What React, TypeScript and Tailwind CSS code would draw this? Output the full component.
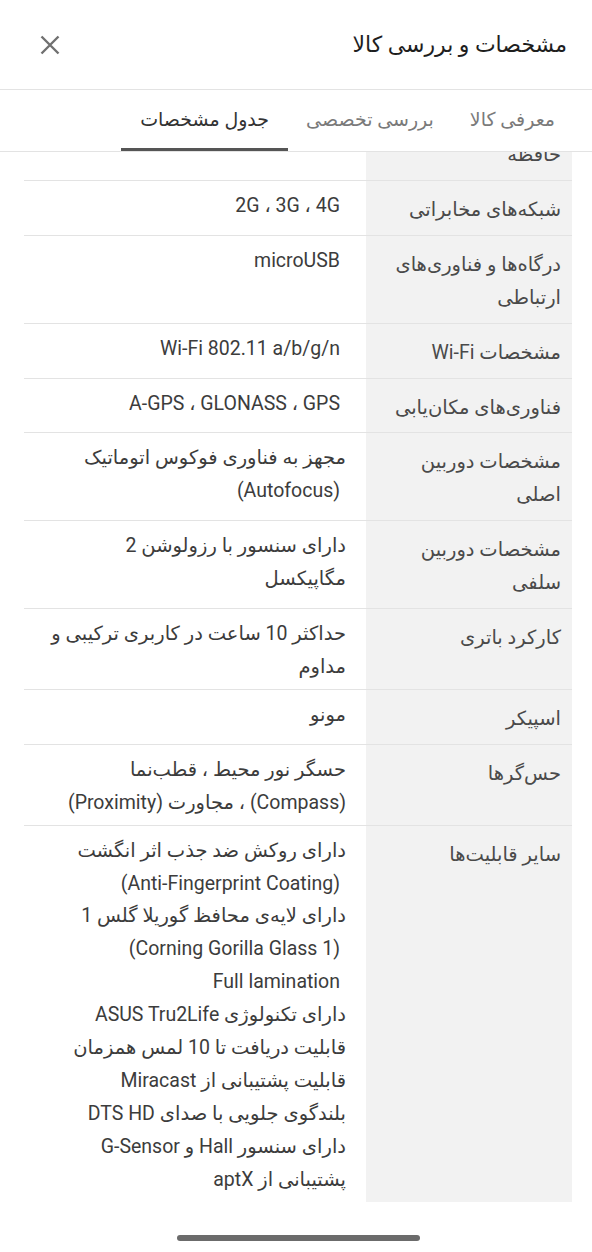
import React from 'react';

type Spec = { label: string[]; value: string[] };

const specs: Spec[] = [
  { label: ['حافظه'], value: [] },
  { label: ['شبکه‌های مخابراتی'], value: ['2G ، 3G ، 4G'] },
  { label: ['درگاه‌ها و فناوری‌های', 'ارتباطی'], value: ['microUSB'] },
  { label: ['مشخصات Wi-Fi'], value: ['Wi-Fi 802.11 a/b/g/n'] },
  { label: ['فناوری‌های مکان‌یابی'], value: ['A-GPS ، GLONASS ، GPS'] },
  { label: ['مشخصات دوربین', 'اصلی'], value: ['مجهز به فناوری فوکوس اتوماتیک', '(Autofocus)'] },
  { label: ['مشخصات دوربین', 'سلفی'], value: ['دارای سنسور با رزولوشن 2', 'مگاپیکسل'] },
  { label: ['کارکرد باتری'], value: ['حداکثر 10 ساعت در کاربری ترکیبی و', 'مداوم'] },
  { label: ['اسپیکر'], value: ['مونو'] },
  { label: ['حس‌گرها'], value: ['حسگر نور محیط ، قطب‌نما', '(Compass) ، مجاورت (Proximity)'] },
  {
    label: ['سایر قابلیت‌ها'],
    value: [
      'دارای روکش ضد جذب اثر انگشت',
      '(Anti-Fingerprint Coating)',
      'دارای لایه‌ی محافظ گوریلا گلس 1',
      '(Corning Gorilla Glass 1)',
      'Full lamination',
      'دارای تکنولوژی ASUS Tru2Life',
      'قابلیت دریافت تا 10 لمس همزمان',
      'قابلیت پشتیبانی از Miracast',
      'بلندگوی جلویی با صدای DTS HD',
      'دارای سنسور Hall و G-Sensor',
      'پشتیبانی از aptX',
    ],
  },
];

const tabs = ['معرفی کالا', 'بررسی تخصصی', 'جدول مشخصات'];

// lines with no Persian letters are laid out ltr and sit a little further in
const isLatin = (s: string) => !/[\u0600-\u06ff]/.test(s.replace(/،/g, ''));

export default function App() {
  return (
    <div
      dir="rtl"
      className="relative flex h-[1252px] w-[592px] flex-col overflow-hidden bg-white"
      style={{ fontFamily: 'Roboto, "DejaVu Sans", sans-serif' }}
    >
      <header className="flex h-[90px] shrink-0 items-center justify-between border-b border-[#e3e3e3] pr-[25px] pl-[40px]">
        <h1 className="text-[22px] font-medium text-[#1e1e1e]">مشخصات و بررسی کالا</h1>
        <button className="flex h-[20px] w-[20px] items-center justify-center text-[#707070]">
          <svg viewBox="0 0 20 20" width="20" height="20" fill="none" stroke="currentColor" strokeWidth="2.4">
            <path d="M1.5 1.5 18.5 18.5M18.5 1.5 1.5 18.5" />
          </svg>
        </button>
      </header>

      <nav className="relative z-10 flex h-[62px] shrink-0 items-stretch border-b border-[#e3e3e3] bg-white pr-[19px]">
        {tabs.map((t, i) => {
          const active = i === 2;
          return (
            <div
              key={t}
              className={
                active
                  ? 'flex items-center border-b-[3px] border-[#555] px-[19px] pt-[3px] text-[19px] font-medium whitespace-nowrap text-[#333]'
                  : 'flex items-center px-[18px] text-[19px] whitespace-nowrap text-[#7a7a7a]'
              }
            >
              {t}
            </div>
          );
        })}
      </nav>

      <div className="flex-1 overflow-hidden">
        <div className="mt-[-26px] mr-[20px] ml-[24px]">
          {specs.map((s, i) => (
            <div
              key={i}
              className={
                'grid grid-cols-[206px_1fr] text-[19.5px] leading-[32.9px] ' +
                (i < specs.length - 1 ? 'border-b border-[#e3e3e3]' : '')
              }
            >
              <div className="bg-[#f2f2f2] pt-[13px] pr-[11px] pb-[8px] whitespace-nowrap text-[#4a4a4a]">
                {s.label.map((l, j) => (
                  <div key={j}>{l}</div>
                ))}
              </div>
              <div className="pt-[9px] pr-[20px] pb-[5px] whitespace-nowrap text-[#3c3c3c]">
                {s.value.map((v, j) =>
                  isLatin(v) ? (
                    <div key={j} className="pr-[6px]">
                      <span dir="ltr">{v}</span>
                    </div>
                  ) : (
                    <div key={j}>{v}</div>
                  )
                )}
              </div>
            </div>
          ))}
        </div>
      </div>

      <div className="absolute bottom-[11px] left-[177px] h-[6px] w-[243px] rounded-full bg-[#6b6b6b]" />
    </div>
  );
}
